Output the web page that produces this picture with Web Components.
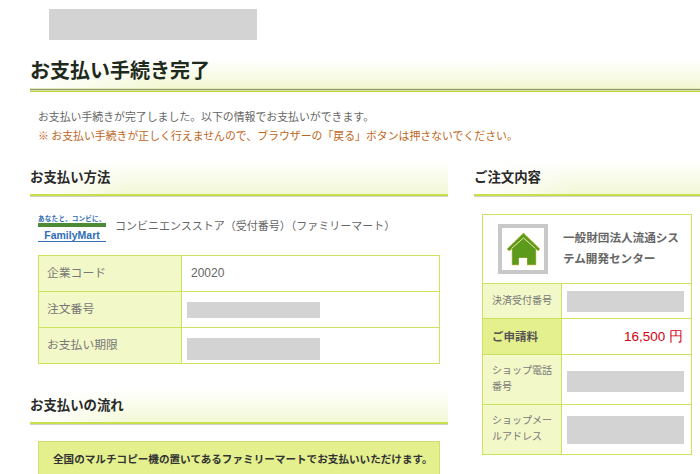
<!DOCTYPE html>
<html lang="ja"><head><meta charset="utf-8">
<style>
html,body{margin:0;padding:0;background:#fff;height:474px;overflow:hidden}
body{font-family:"Noto Sans CJK JP","Liberation Sans",sans-serif;color:#666;font-size:11px}
</style></head><body>
<pay-page></pay-page>
<script>
function def(name,css,html){
  customElements.define(name,class extends HTMLElement{
    constructor(){super();const r=this.attachShadow({mode:'open'});r.innerHTML='<style>'+css+'</style>'+html;}
  });
}
def('redact-box',':host{display:block;background:#d3d3d3;width:var(--w,100%);height:var(--h,20px)}','');
def('page-title',`:host{display:block;height:32px;margin-left:30px}
 .b{height:28px;background:linear-gradient(90deg,#fff,rgba(255,255,255,0) 130px),linear-gradient(#fff,#f3f8d2);font:bold 20px/19px "Noto Sans CJK JP",sans-serif;color:#1f2a1f;border-bottom:1px solid #e3eab8}
 .l{height:1px;background:#8f9a70}.m{height:1px;background:#d8e0a8}.g{height:1px;background:#b8d63c}`,
 '<div class="b"><slot></slot></div><div class="l"></div><div class="m"></div><div class="g"></div>');
def('section-head',`:host{display:block;height:37px}
 .b{height:34px;box-sizing:border-box;padding-top:7px;background:linear-gradient(90deg,#fff,rgba(255,255,255,0) 100px),linear-gradient(#fff,#f3f8d6);font:bold 13.4px/18px "Noto Sans CJK JP",sans-serif;color:#2a2a2a}
 .g{height:2px;background:#c8e04c}.s{height:1px;background:#cfd2c4}`,
 '<div class="b"><slot></slot></div><div class="g"></div><div class="s"></div>');
def('info-row',`:host{display:grid;grid-template-columns:143px 1fr;height:36px;box-sizing:border-box;border-top:1px solid #cbe45f}
 .k{background:#f2f8c8;border-right:1px solid #cbe45f;padding:0 0 5px 8px;display:flex;align-items:center;font-size:11.8px;color:#777}
 .v{display:flex;align-items:center;padding-left:5px;font-size:12px;color:#666}
 `,'<div class="k"><slot name="k"></slot></div><div class="v"><slot></slot></div>');
def('info-table',`:host{display:block;border:1px solid #cbe45f;border-top:0;margin-left:8px;width:400px}`,'<slot></slot>');
def('order-row',`:host{display:grid;grid-template-columns:79px 1fr;box-sizing:border-box;border-top:1px solid #cbe45f;height:var(--rh,50px)}
 .k{background:var(--kbg,#f2f8c8);border-right:1px solid #cbe45f;display:flex;align-items:center;padding:0 4px var(--kpb,3px) 9px;font-size:var(--kfs,10px);line-height:16.5px;font-weight:var(--kw,400);color:var(--kc,#777)}
 .v{display:flex;align-items:center;justify-content:var(--vj,flex-start);padding:0 5px;font-size:12px}
 `,'<div class="k"><slot name="k"></slot></div><div class="v"><slot></slot></div>');
def('order-card',`:host{display:block;border:1px solid #cbe45f;margin-left:8px;width:208px;margin-top:17px}
 .h{display:flex;height:68px;align-items:center}
 .i{width:80px;display:flex;justify-content:center;align-items:center}
 .t{flex:1;font:bold 11.6px/21px "Noto Sans CJK JP",sans-serif;color:#666;padding:0 5px 2px 0}
 `,`<div class="h"><div class="i"><slot name="icon"></slot></div><div class="t"><slot name="title"></slot></div></div><slot></slot>`);
def('family-logo',`:host{display:block;width:68px;height:29px;color:#2f6db5;line-height:1}
 .a{font:bold 6.6px/9px "Noto Sans CJK JP",sans-serif;white-space:nowrap;height:9px;letter-spacing:.2px;padding-top:1px}
 .g{height:4px;background:#4d8a35}
 .f{font:bold 10.5px/12px "Liberation Sans",sans-serif;text-align:center;height:12px;margin-top:1px;padding-top:1px}
 .u{height:1px;background:#3c70b8}`,
 '<div class="a">あなたと、コンビに、</div><div class="g"></div><div class="f">FamilyMart</div><div class="u"></div>');
def('shop-icon',`:host{display:block;width:50px;height:50px;box-sizing:border-box;border:4px solid #c8c8c8;background:#fff}
 svg{display:block;width:42px;height:42px}`,
 `<svg viewBox="0 0 42 42"><path d="M21.500 5L5 21L7 23L10 21V37H17V30H25V37H34V21L36 23L38 21Z" fill="#5c9a1c" stroke="#d8c45a" stroke-width=".6"/><path d="M9.500 20.500L21.500 10L33.500 20.500" fill="none" stroke="#f4e9a6" stroke-width="1"/><rect x="17" y="30" width="8" height="7" fill="#fff"/></svg>`);
def('pay-page',`:host{display:block;width:700px;height:474px;overflow:hidden}
 .top{padding:9px 0 0 49px;height:60px;box-sizing:border-box}
 .notes{margin:15px 0 0 38px;font-size:10.88px;line-height:19px;height:38px;color:#666}
 .warn{color:#c0661c}
 .cols{display:grid;grid-template-columns:418px 226px;column-gap:26px;margin:15px 0 0 30px}
 .method{display:flex;align-items:center;gap:9px;margin:16px 0 13px 8px;height:29px;font-size:11px}
 .method span{margin-bottom:5px}
 .flow{margin-top:24px}
 .call{margin:16px 0 0 8px;width:402px;height:60px;box-sizing:border-box;border:1px solid #d0e070;background:#e4f08d;font:bold 10.6px/33px "Noto Sans CJK JP",sans-serif;color:#333;padding-left:14px;white-space:nowrap}
 .fee{font:13.5px "Liberation Sans",sans-serif;color:#d8000f;padding-right:3px}
 .num{font:12px "Liberation Sans",sans-serif;margin:0 0 1px 4px}
 `,`<div class="top"><redact-box style="--w:208px;--h:31px"></redact-box></div>
 <page-title>お支払い手続き完了</page-title>
 <div class="notes"><div>お支払い手続きが完了しました。以下の情報でお支払いができます。</div><div class="warn">※ お支払い手続きが正しく行えませんので、ブラウザーの「戻る」ボタンは押さないでください。</div></div>
 <div class="cols">
  <div>
   <section-head>お支払い方法</section-head>
   <div class="method"><family-logo></family-logo><span>コンビニエンスストア（受付番号）（ファミリーマート）</span></div>
   <info-table>
    <info-row><span slot="k">企業コード</span><span class="num">20020</span></info-row>
    <info-row><span slot="k">注文番号</span><redact-box style="--w:133px;--h:16px"></redact-box></info-row>
    <info-row><span slot="k">お支払い期限</span><redact-box style="--w:133px;--h:22px;margin-top:6px"></redact-box></info-row>
   </info-table>
   <div class="flow"><section-head>お支払いの流れ</section-head>
    <div class="call">全国のマルチコピー機の置いてあるファミリーマートでお支払いいただけます。</div></div>
  </div>
  <div>
   <section-head>ご注文内容</section-head>
   <order-card>
    <shop-icon slot="icon"></shop-icon>
    <span slot="title">一般財団法人流通システム開発センター</span>
    <order-row style="--rh:35px;--kpb:1px"><span slot="k">決済受付番号</span><redact-box style="--w:117px;--h:21px"></redact-box></order-row>
    <order-row style="--rh:36px;--kbg:#e4f08d;--kfs:11.5px;--kw:700;--kc:#555;--vj:flex-end;--kpb:0px"><span slot="k">ご申請料</span><span class="fee">16,500 円</span></order-row>
    <order-row style="--rh:50px"><span slot="k">ショップ電話番号</span><redact-box style="--w:117px;--h:21px;margin-top:4px"></redact-box></order-row>
    <order-row style="--rh:50px"><span slot="k">ショップメールアドレス</span><redact-box style="--w:117px;--h:28px"></redact-box></order-row>
   </order-card>
  </div>
 </div>`);
</script></body></html>
